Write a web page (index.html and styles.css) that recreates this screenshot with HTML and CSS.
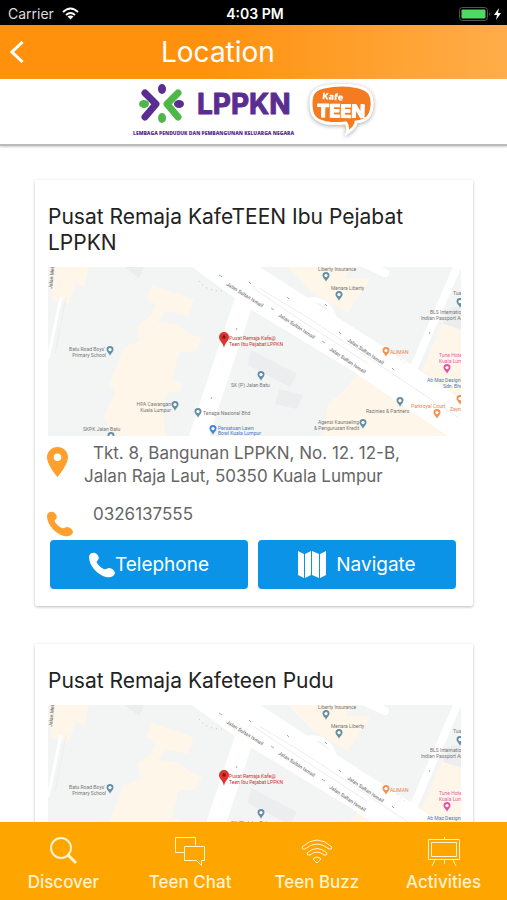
FILE: index.html
```html
<!DOCTYPE html>
<html lang="ms">
<head>
<meta charset="UTF-8">
<title>Location</title>
<meta name="viewport" content="width=device-width, initial-scale=1.0">
<link rel="stylesheet" href="styles.css">
</head>
<body>

<!-- shared drawings -->
<svg class="defs" width="0" height="0" aria-hidden="true">
    <symbol id="phone" viewBox="0 0 26 26">
        <path d="M0 5C0 2 3 0 6 1c3 1 5 5 3 7-1 1-2 2-1 3 2 3 4 5 7 6 2 1 3-1 5-1 3 0 6 3 6 5-1 4-5 5-9 4C9 23 0 14 0 5z"/>
    </symbol>
    <symbol id="pin" viewBox="0 0 21 30">
        <path fill-rule="evenodd" d="M10.500 0C4.700 0 0 4.600 0 10.300 0 18 10.500 30 10.500 30S21 18 21 10.300C21 4.600 16.300 0 10.500 0zm0 14a3.800 3.800 0 1 1 0-7.600 3.800 3.800 0 0 1 0 7.600z"/>
    </symbol>
    <symbol id="poi" viewBox="0 0 8 10" overflow="visible">
        <path d="M4 0a3.500 3.500 0 0 0-3.500 3.600C.5 6 3 7 4 10c1-3 3.500-4 3.500-6.400A3.500 3.500 0 0 0 4 0z"/>
        <circle cx="4" cy="3.600" r="1.600" fill="#fff"/>
    </symbol>
    <symbol id="map" viewBox="0 0 413 169" preserveAspectRatio="none">
        <rect width="413" height="169" fill="#f3f4f4"/>
        <g fill="#fff6ea">
            <path d="M5 0h36l-5 20-8-3-7 19L3 33z"/>
            <path d="M104 18l42 14-6 17-22-5-8 11 18 2 16 11 10 3-7 14-16 0-7 27 11 4-4 10-11-1-5 14 2 30H66l-10-19 11-24-6-9 15-37 16-6-3-16 14-9 5-12-10-5z"/>
            <path d="M240 0h65l-8 11h26L300 46 268 28z"/>
            <path d="M313 104l100 65H274l6-32 14-12z"/>
            <path d="M395 55l18 9v69l-40-27z"/>
        </g>
        <g fill="#ebedee">
            <path d="M76 0h20l-5 11z"/><path d="M203 83l46 24-7 13-42-22z"/>
            <path d="M231 122l24 6-6 14-22-5z"/><path d="M400 42l13-3v23l-18-5z"/>
        </g>
        <g fill="none" stroke="#fff">
            <path stroke-width="19" d="M196 34L150 172"/>
            <path stroke-width="8" d="M410-2L364 105"/>
            <path stroke-width="8" stroke-linecap="round" d="M315-4l22 10"/>
            <path stroke-width="5" d="M255 34q27-7 33 23"/>
            <path stroke-width="3" d="M13 30L0 92"/>
        </g>
        <path fill="#fff" d="M144 0h68l80 52 75 48 46 33v36h-13l-97-66-104-63z"/>
        <g fill="none" stroke="#eceeef">
            <path d="M211 21l48 29 83 55 69 46"/><path d="M205 21l49 33 65 42M18 30L7 87"/>
            <path stroke="#bbb" stroke-dasharray="1 4" d="M151 14q8 11 26 10M345 86l12 10"/>
        </g>
        <path fill="none" stroke="#aaa" d="M171 8l3 2M223 41l3 2M274 74l3 2M201 15l2 2M239 30l2 2M277 37l2 2M291 65l2 2M344 101l2 2M188 63l1-2M163 132l1-2M381 67l1-2"/>
        <g class="map-road">
            <text transform="translate(178 18) rotate(32)">Jalan Sultan Ismail</text>
            <text transform="translate(230 49) rotate(33)">Jalan Sultan Ismail</text>
            <text transform="translate(299 74) rotate(34)">Jalan Sultan Ismail</text>
            <text transform="translate(281 83) rotate(34)">Jalan Sultan Ismail</text>
            <text transform="translate(4 22) rotate(-84)">Jalan Melayu</text>
        </g>
        <g class="map-label">
            <text x="57" y="84" text-anchor="end">Batu Road Boys'</text>
            <text x="58" y="90" text-anchor="end">Primary School</text>
            <text x="123" y="139" text-anchor="end">HPA Cawangan</text>
            <text x="123" y="145" text-anchor="end">Kuala Lumpur</text>
            <text x="155" y="148">Tenaga Nasional Bhd</text>
            <text x="35" y="164">SKPK Jalan Batu</text>
            <text x="183" y="120">SK (P) Jalan Batu</text>
            <text x="270" y="4">Liberty Insurance</text>
            <text x="283" y="23">Menara Liberty</text>
            <text x="405" y="28">Tuan</text>
            <text x="382" y="47">BLS Internationa</text>
            <text x="373" y="53">Indian Passport An</text>
            <text x="318" y="146">Razinies &amp; Partners</text>
            <text x="270" y="157">Agensi Kaunseling</text>
            <text x="266" y="163">&amp; Pengurusan Kredit</text>
            <g fill="#c33"><text x="181" y="73">Pusat Remaja Kafe@</text><text x="181" y="79">Teen Ibu Pejabat LPPKN</text></g>
            <g fill="#4478c8"><text x="170" y="163">Persatuan Lawn</text><text x="170" y="168">Bowl Kuala Lumpur</text><text x="379" y="115">Ab Maz Designs</text><text x="395" y="121">Sdn. Bhd</text></g>
            <g fill="#e8854a"><text x="342" y="87">ALIMAN</text><text x="363" y="141">Parkroyal Court</text><text x="402" y="144">Zayna</text></g>
            <g fill="#e661aa"><text x="391" y="90">Tune Hotel</text><text x="391" y="96">Kuala Lumpur</text></g>
        </g>
        <g fill="#648fa5">
            <use href="#poi" x="58" y="79" width="8" height="10"/>
            <use href="#poi" x="123" y="134" width="8" height="10"/>
            <use href="#poi" x="146" y="141" width="8" height="10"/>
            <use href="#poi" x="59" y="165" width="8" height="10"/>
            <use href="#poi" x="209" y="104" width="8" height="10"/>
            <use href="#poi" x="274" y="5" width="8" height="10"/>
            <use href="#poi" x="287" y="24" width="8" height="10"/>
            <use href="#poi" x="408" y="31" width="8" height="10"/>
            <use href="#poi" x="348" y="130" width="8" height="10"/>
            <use href="#poi" x="311" y="152" width="8" height="10"/>
        </g>
        <use href="#poi" x="161" y="158" width="8" height="10" fill="#4285d8"/>
        <use href="#poi" x="334" y="80" width="8" height="10" fill="#f39252"/>
        <use href="#poi" x="385" y="142" width="8" height="10" fill="#f39252"/>
        <use href="#poi" x="408" y="128" width="8" height="10" fill="#f39252"/>
        <use href="#poi" x="395" y="97" width="8" height="10" fill="#e653a6"/>
        <path fill="#dc342c" d="M176 65a5 5 0 0 0-5 5c0 4 4 5 5 11 1-6 5-7 5-11a5 5 0 0 0-5-5z"/>
        <circle cx="176" cy="70" r="1.700" fill="#7d1713"/>
    </symbol>
    <symbol id="folded-map" viewBox="0 0 28 27">
        <path d="M0 0l6 3v24l-6-3zM7 3l6-3v24l-6 3zM14 0l7 3v24l-7-3zM22 3l6-3v24l-6 3z"/>
    </symbol>
</svg>

<div class="status">
    <div class="carrier">Carrier
        <svg width="17" height="13" viewBox="0 0 17 13" fill="none" stroke="#fff" stroke-width="2">
            <path d="M1 5q7.500-7 15 0M4 8q4.500-4 9 0"/><path fill="#fff" stroke="none" d="M5.500 9.500q3-2 6 0l-3 3z"/>
        </svg>
    </div>
    <div class="clock">4:03 PM</div>
    <div class="battery">
        <svg width="43" height="14" viewBox="0 0 43 14">
            <rect x=".5" y=".5" width="28" height="13" rx="3" fill="none" stroke="#555"/>
            <rect x="2.500" y="2.500" width="24" height="9" rx="1" fill="#4cd964"/>
            <path fill="#555" d="M30 5q2 2 0 4z"/>
            <path fill="#fff" d="M40 1l-5 7h3l-1 5 5-7h-3z"/>
        </svg>
    </div>
</div>

<header class="navbar">
    <button class="back" type="button" aria-label="Back">
        <svg width="14" height="22" viewBox="0 0 14 22" fill="none" stroke="#fff" stroke-width="3"><path d="M12.500 1L2 11l10.500 10"/></svg>
    </button>
    <h1>Location</h1>
</header>

<div class="logos">
    <svg width="167" height="54" viewBox="0 0 167 54" role="img" aria-label="LPPKN">
        <g fill="none" stroke-width="7" stroke-linecap="round" stroke-linejoin="round">
            <path stroke="#5a2d91" d="M13 9l11 11-11 13"/>
            <path stroke="#4db848" d="M46 9L35 20l11 13"/>
        </g>
        <g fill="#5a2d91"><ellipse cx="30" cy="5" rx="4" ry="5"/><ellipse cx="47" cy="20" rx="5" ry="4"/></g>
        <g fill="#4db848"><ellipse cx="30" cy="34" rx="4" ry="5"/><ellipse cx="12" cy="20" rx="5" ry="4"/></g>
        <text class="logo-name" x="65" y="30">LPPKN</text>
        <text class="logo-tag" x="1" y="51">LEMBAGA PENDUDUK DAN PEMBANGUNAN KELUARGA NEGARA</text>
    </svg>
    <svg class="bubble" width="66" height="54" viewBox="0 0 66 54" role="img" aria-label="Kafe TEEN">
        <path fill="#f47b20" stroke="#fff" stroke-width="3" d="M15 3Q33-1 50 3c11 3 14 9 13 19-1 10-5 15-16 16 0 4-3 7-9 11 1-4 1-7-1-10-11 1-18 1-23-1C4 35 2 29 2 19 2 9 6 5 15 3z"/>
        <text class="kafe" transform="translate(13 15) rotate(5)">Kafe</text>
        <text class="teen" transform="translate(8 33) rotate(1)">TEEN</text>
    </svg>
</div>

<main>
    <section class="card">
        <h2>Pusat Remaja KafeTEEN Ibu Pejabat LPPKN</h2>
        <svg class="map" viewBox="0 0 413 169"><use href="#map"/></svg>
        <div class="row">
            <svg class="pin" width="21" height="30"><use href="#pin"/></svg>
            <p>Tkt. 8, Bangunan LPPKN, No. 12. 12-B, Jalan Raja Laut, 50350 Kuala Lumpur</p>
        </div>
        <div class="row phone-row">
            <svg width="26" height="26"><use href="#phone"/></svg>
            <p>0326137555</p>
        </div>
        <div class="actions">
            <button type="button"><svg width="26" height="26"><use href="#phone"/></svg>Telephone</button>
            <button class="navigate" type="button"><svg width="28" height="27"><use href="#folded-map"/></svg>Navigate</button>
        </div>
    </section>

    <section class="card">
        <h2>Pusat Remaja Kafeteen Pudu</h2>
        <svg class="map" viewBox="0 0 413 169"><use href="#map"/></svg>
    </section>
</main>

<nav class="tabs">
    <a href="#discover">
        <svg viewBox="0 0 32 30" stroke-width="2"><circle cx="14" cy="12" r="10"/><path stroke-width="3" d="M21 19l8 8"/></svg>
        Discover
    </a>
    <a href="#chat">
        <svg viewBox="0 0 32 30"><path d="M10.500 16.500h-9v-15h20v8"/><path d="M10.500 10.500h20v14h-3v5l-5-5h-12z"/></svg>
        Teen Chat
    </a>
    <a href="#buzz">
        <svg viewBox="0 0 32 30"><path d="M1 11Q16-3 31 11q0 3-3 2-12-10-24 0-3 1-3-2zM6 17q10-9 20 0 0 3-3 2-7-6-14 0-3 1-3-2zM12 23q4-4 8 0l-4 4z"/></svg>
        Teen Buzz
    </a>
    <a href="#activities">
        <svg viewBox="0 0 32 30"><path d="M.5 3.500h31v20H.5zM3.500 6.500h25v14h-25zM16.500 1v2M7 24l-3 6M25 24l3 6M16.500 24v4"/></svg>
        Activities
    </a>
</nav>

</body>
</html>
```
FILE: styles.css
```css
*{box-sizing:border-box}
body{margin:0;height:100vh;display:flex;flex-direction:column;overflow:hidden;background:#fff;font-family:Inter,"Liberation Sans",sans-serif;color:#222}
h1,h2,p{margin:0;font-weight:400}
svg{flex:none}
button{border:none;font-family:inherit;cursor:pointer}
.defs{position:absolute}

.status{flex:none;height:25px;padding:2px 5px 0 8px;background:#000;color:#fff;display:grid;grid-template-columns:1fr auto 1fr;align-items:center;font-size:14px}
.carrier{display:flex;align-items:center;gap:8px;color:#ddd}
.clock{font-weight:600}
.battery{display:flex;justify-content:flex-end}

.navbar{flex:none;height:54px;padding:0 10px;display:flex;align-items:center;background:linear-gradient(90deg,#ff910d 40%,#ffad49)}
.navbar h1{padding-left:137px;font-size:28px;color:#fff}
.back{width:14px;height:22px;padding:0;background:none}
.back svg{display:block}

.logos{flex:none;height:67px;padding-top:5px;display:flex;justify-content:center;gap:10px;border-bottom:2px solid #bbb;box-shadow:0 1px 2px #ccc}
.logo-name{font-size:28px;font-weight:700;fill:#5a2d91;stroke:#5a2d91;stroke-linejoin:round}
.logo-tag{font-family:"Open Sans",sans-serif;font-size:5px;font-weight:800;fill:#5a2d91}
.bubble{filter:drop-shadow(0 1px 2px #aaa)}
.kafe,.teen{fill:#fff;font-weight:800}
.kafe{font-family:"Open Sans",sans-serif;font-size:9px}
.teen{font-size:18px;stroke:#fff;stroke-linejoin:round}

main{flex:1;min-height:0;overflow:hidden;padding:34px 34px 0 35px}
.card{margin-bottom:38px;padding:24px 12px 17px 13px;border-radius:2px;background:#fff;box-shadow:0 1px 3px #bbb}
.card h2{margin-bottom:11px;font-size:21px;line-height:26px}
.map{display:block;width:100%;height:auto}
.map-label,.map-road{font-family:Roboto,sans-serif;font-size:5px;fill:#777}
.map-road{font-weight:500}

.row{display:flex;gap:16px;margin:6px 0 0 -1px;fill:#ff9f2e;color:#666}
.row p{max-width:330px;font-size:17px;line-height:23px;text-indent:9px}
.pin{margin-top:5px}
.phone-row{gap:11px;margin-top:15px}
.phone-row svg{margin-top:8px}
.actions{display:flex;gap:10px;margin:3px 5px 0 2px}
.actions button{flex:1;height:49px;padding:0;display:flex;align-items:center;justify-content:center;border-radius:4px;background:#0b93e7;color:#fff;fill:#fff;font-size:19px}
.actions .navigate{gap:10px}

.tabs{flex:none;height:78px;display:grid;grid-template-columns:repeat(4,1fr);background:#ffa500}
.tabs a{display:flex;flex-direction:column;align-items:center;gap:5px;padding-top:14px;color:#fff3d0;font-size:17px;font-weight:500;line-height:22px;text-decoration:none}
.tabs svg{width:32px;height:30px;fill:none;stroke:#fff3d0}
```
